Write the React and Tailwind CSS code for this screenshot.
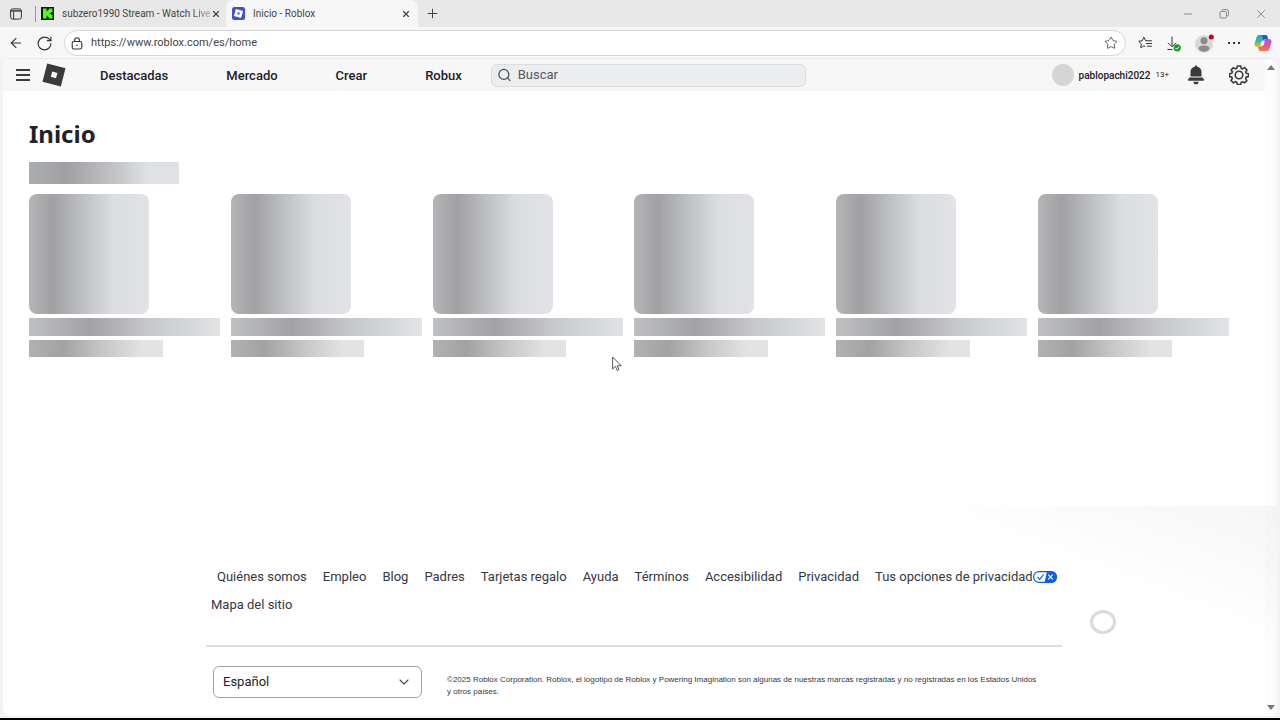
import { ArrowLeft, ChevronDown, Minus, Plus, RotateCw, Search, Star, X } from "lucide-react";

const navLinks = ["Destacadas", "Mercado", "Crear", "Robux"];

const footerLinks = [
  "Quiénes somos",
  "Empleo",
  "Blog",
  "Padres",
  "Tarjetas regalo",
  "Ayuda",
  "Términos",
  "Accesibilidad",
  "Privacidad",
];

function KickIcon() {
  return (
    <svg viewBox="0 0 13 13" className="size-[13px] shrink-0">
      <rect width="13" height="13" fill="#0b1a08" />
      <path d="M2 1.500h3.600v2.700h1V3.100h1.300V1.500H11.500v3.500H10v1H8.800v1H10v1h1.500v3.500H7.900V9.900H6.600V8.800h-1v2.700H2z" fill="#53fc18" />
    </svg>
  );
}

function RobloxFavicon() {
  return (
    <svg viewBox="0 0 13 13" className="size-[13px] shrink-0">
      <rect width="13" height="13" rx="2.5" fill="#3d50d8" />
      <path d="M3.900 1.900l7.200 2-2 7.200-7.200-2zM5.700 5.200l-.5 2.100 2.100.5.5-2.100z" fill="#fff" fillRule="evenodd" />
    </svg>
  );
}

function RobloxLogo() {
  return (
    <svg viewBox="0 0 24 24" className="size-6">
      <path d="M5.200.5L23.500 5.200 18.800 23.500.5 18.800zM10.200 8.600l-1.400 5.200 5.200 1.400 1.400-5.200z" fill="#393b3d" fillRule="evenodd" />
    </svg>
  );
}

function LockIcon() {
  return (
    <svg viewBox="0 0 12 13" className="h-[13px] w-3 shrink-0" fill="none" stroke="#333" strokeWidth="1.100">
      <rect x="1.200" y="4.500" width="9.600" height="7.500" rx="1.800" />
      <path d="M3.600 4.300V3.200a2.400 2.400 0 014.800 0v1.100" />
      <circle cx="6" cy="8.200" r=".8" fill="#333" stroke="none" />
    </svg>
  );
}

function TabBar() {
  return (
    <div className="flex h-[27px] items-stretch bg-[#e8e8e8] font-[Roboto,sans-serif] text-[10px] text-[#444]">
      <button aria-label="Pestañas" className="flex w-8 items-center justify-center">
        <svg viewBox="0 0 12 12" className="size-3" fill="none" stroke="#333">
          <rect x=".6" y=".9" width="10.800" height="10.200" rx="2" />
          <path d="M.6 2.900h10.800" strokeWidth="1.400" />
          <path d="M3.600 3.500v7.500" />
        </svg>
      </button>
      <div className="flex w-[194px] items-center gap-2 pl-[3px] pr-[6px]">
        <span className="-mr-[3px] h-4 w-px shrink-0 bg-[#999]" />
        <KickIcon />
        <span className="-mr-2 flex-1 whitespace-nowrap">
          subzero1990 Stream - Watch <span className="bg-linear-to-r from-[#444] to-[#bbb] bg-clip-text text-transparent">Live</span>
        </span>
        <button aria-label="Cerrar pestaña" className="shrink-0">
          <X className="size-[10px]" strokeWidth={2.800} />
        </button>
      </div>
      <div className="flex w-[192px] items-center gap-2 rounded-t-lg bg-[#f7f7f7] pl-[6px] pr-[7px]">
        <RobloxFavicon />
        <span className="flex-1">Inicio - Roblox</span>
        <button aria-label="Cerrar pestaña">
          <X className="size-[10px]" strokeWidth={2.800} />
        </button>
      </div>
      <button aria-label="Nueva pestaña" className="flex w-7 items-center justify-center">
        <Plus className="size-[15px]" strokeWidth={1.600} />
      </button>
      <div className="ml-auto flex items-center gap-6 pr-3 text-[#888]">
        <button aria-label="Minimizar">
          <Minus className="size-3" strokeWidth={2} />
        </button>
        <button aria-label="Restaurar">
          <svg viewBox="0 0 12 12" className="size-3" fill="none" stroke="currentColor">
            <rect x="2" y="3.500" width="6.500" height="6.500" rx="1.200" />
            <path d="M4 3.200V2.800A1.300 1.300 0 015.300 1.500h3.200a2 2 0 012 2v3A1.300 1.300 0 019.200 7.900h-.5" />
          </svg>
        </button>
        <button aria-label="Cerrar">
          <X className="size-[14px]" strokeWidth={1.600} />
        </button>
      </div>
    </div>
  );
}

function CopilotIcon() {
  return (
    <svg viewBox="0 0 18 18" className="size-[18px]">
      <defs>
        <linearGradient id="cpA" x1="0" y1="0" x2="0" y2="1">
          <stop offset="0" stopColor="#1ba8e8" />
          <stop offset=".55" stopColor="#4bb88a" />
          <stop offset="1" stopColor="#f3c21c" />
        </linearGradient>
        <linearGradient id="cpB" x1="0" y1="0" x2="0" y2="1">
          <stop offset="0" stopColor="#a95be8" />
          <stop offset=".5" stopColor="#e7509a" />
          <stop offset="1" stopColor="#f5784a" />
        </linearGradient>
      </defs>
      <path d="M5 1h6.500c1 0 1.500.6 1.800 1.500L14 5h-2.500c-1.200 0-1.800.6-2.200 1.800L7.500 13H3.500C1 13 0 11.500.7 9.200L2.600 3C3 1.700 3.800 1 5 1z" fill="url(#cpA)" />
      <path d="M13 17H6.500c-1 0-1.500-.6-1.800-1.500L4 13h2.500c1.200 0 1.800-.6 2.200-1.800L10.500 5h4c2.500 0 3.500 1.500 2.800 3.800L15.400 15c-.4 1.300-1.200 2-2.400 2z" fill="url(#cpB)" />
      <path d="M8 1h3.500c1 0 1.500.6 1.800 1.500L14 5h-2.500c-1 0-1.700.4-2.100 1.400z" fill="#2456cf" />
      <path d="M7.600 7h3.200l-1.300 4.500H6.300z" fill="#fff" />
    </svg>
  );
}

function AddressBar() {
  return (
    <div className="flex h-[31px] items-center bg-[#f7f7f7] pl-2 pr-2 pt-px text-[#333]">
      <button aria-label="Atrás">
        <ArrowLeft className="size-4" strokeWidth={1.600} />
      </button>
      <button aria-label="Actualizar" className="ml-3">
        <RotateCw className="size-[17px]" strokeWidth={1.600} />
      </button>
      <div className="ml-[11px] flex h-[26px] flex-1 items-center rounded-full border border-[#d6d6d6] bg-white pl-[6px] pr-[7px]">
        <LockIcon />
        <input
          aria-label="Dirección"
          defaultValue="https://www.roblox.com/es/home"
          className="ml-2 flex-1 bg-transparent pt-px font-[Roboto,sans-serif] text-[11px] text-[#444] outline-none"
        />
        <button aria-label="Favorito">
          <Star className="size-[14px] text-[#555]" strokeWidth={1.600} />
        </button>
      </div>
      <div className="flex items-center gap-[14px] pl-3">
        <button aria-label="Favoritos">
          <svg viewBox="0 0 14 14" className="size-[14px]" fill="none" stroke="currentColor" strokeLinejoin="round" strokeLinecap="round">
            <path d="M8.800 4.800H7.700L5.800 1.200 4.200 4.800.7 5.300l2.600 2.600-.6 3.800L5.800 10l1 .5M9.500 4.800h4M8.500 7.500h5M9.500 10.200h4" />
          </svg>
        </button>
        <button aria-label="Descargas">
          <svg viewBox="0 0 15 17" className="h-[17px] w-[15px]">
            <path d="M6 1.500v10M2 7.800l4 4 4-4M1.500 14.500h5" fill="none" stroke="#333" />
            <circle cx="11.200" cy="12.800" r="3.600" fill="#169c1e" />
            <path d="M9.400 12.900l1.300 1.300 2.300-2.500" fill="none" stroke="#fff" />
          </svg>
        </button>
        <button aria-label="Perfil">
          <svg viewBox="0 0 19 19" className="size-[19px]">
            <circle cx="9" cy="10" r="9" fill="#d9d9d9" />
            <circle cx="9" cy="6.800" r="3.500" fill="#8b8b8b" />
            <path d="M3.500 14.500c0-2 1.800-3 5.500-3s5.500 1 5.500 3c-1.200 2.200-3 3.300-5.500 3.300s-4.300-1.100-5.500-3.300z" fill="#8b8b8b" />
            <circle cx="16.300" cy="3" r="2.500" fill="#c5001f" />
          </svg>
        </button>
        <button aria-label="Más" className="flex gap-[3px]">
          <span className="size-[2px] bg-[#333]" />
          <span className="size-[2px] bg-[#333]" />
          <span className="size-[2px] bg-[#333]" />
        </button>
        <button aria-label="Copilot">
          <CopilotIcon />
        </button>
      </div>
    </div>
  );
}

function NavBar() {
  return (
    <header className="flex h-8 items-center bg-[#f7f7f8] pl-[13px] pr-4 text-[#202227]">
      <button aria-label="Menú" className="flex w-[14px] flex-col gap-[3px]">
        <span className="h-[2px] bg-[#393b3d]" />
        <span className="h-[2px] bg-[#393b3d]" />
        <span className="h-[2px] bg-[#393b3d]" />
      </button>
      <a href="#" aria-label="Roblox" className="ml-3">
        <RobloxLogo />
      </a>
      <nav className="ml-[5px] flex pt-[2px] text-[13px] font-medium">
        {navLinks.map((label) => (
          <a key={label} href="#" className="px-[29px]">
            {label}
          </a>
        ))}
      </nav>
      <label className="flex h-[23px] w-[315px] items-center gap-[6px] rounded-md border border-[#dcdde0] bg-[#ecedef] px-[5px]">
        <Search className="size-4 text-[#494d5a]" strokeWidth={2} />
        <input
          aria-label="Buscar"
          placeholder="Buscar"
          className="w-full bg-transparent text-[13px] outline-none placeholder:text-[#55585f]"
        />
      </label>
      <div className="ml-auto flex items-center">
        <span className="size-[22px] rounded-full bg-[#d5d5d6]" />
        <a href="#" className="ml-[5px] text-[10px] font-medium">
          pablopachi2022
        </a>
        <span className="ml-[5px] text-[8px]">13+</span>
        <button aria-label="Notificaciones" className="ml-[18px]">
          <svg viewBox="0 0 18 20" className="h-5 w-[18px]" fill="#393b3d">
            <path d="M9 .5c.9 0 1.300.5 1.300 1.300 2.700.6 4.200 2.600 4.200 5.200v4.500h-11V7c0-2.600 1.500-4.600 4.200-5.200C7.700 1 8.100.5 9 .5zM2.500 12.500h13l1.300 1.700c.5.700.2 1.600-.8 1.600H2c-1 0-1.300-.9-.8-1.600zM6.200 16.700h5.600c-.3 1.600-1.300 2.600-2.800 2.600s-2.500-1-2.800-2.600z" />
          </svg>
        </button>
        <button aria-label="Configuración" className="ml-6">
          <svg viewBox="0 0 20 20" className="size-5" fill="none" stroke="#393b3d" strokeWidth="1.600" strokeLinejoin="round">
            <path d="M8.300 1h3.400l.5 2.300 1.400.6 2-1.300L18 5l-1.300 2 .5 1.300 2.300.4v2.900l-2.300.5-.6 1.500 1.300 2-2.400 2.300-2-1.200-1.300.5-.5 2.300H8.300l-.5-2.300-1.400-.6-2 1.300L2 15.500l1.300-2-.5-1.400-2.300-.5V8.700l2.300-.5.600-1.400L2.100 5l2.300-2.400 2 1.300 1.400-.6z" />
            <circle cx="10" cy="10" r="3.800" />
          </svg>
        </button>
      </div>
    </header>
  );
}

function SkeletonCard() {
  return (
    <div className="flex flex-col gap-1">
      <div className="size-[120px] rounded-lg bg-[linear-gradient(to_right,#b4b5b7_0%,#a1a1a3_20%,#bfc0c3_45%,#dcdde0_70%,#e2e3e6_100%)]" />
      <div className="h-[18px] bg-[linear-gradient(to_right,#bfc0c2_0%,#a2a2a4_32%,#c6c7ca_62%,#e2e3e5_100%)]" />
      <div className="h-[17px] w-[70%] bg-[linear-gradient(to_right,#b0b2b3_0%,#a0a2a3_25%,#c6c7c9_55%,#e2e3e5_85%)]" />
    </div>
  );
}

function PrivacyBadge() {
  return (
    <svg viewBox="0 0 24 12" className="h-3 w-6">
      <rect x=".6" y=".6" width="22.800" height="10.800" rx="5.400" fill="#fff" stroke="#0b5fe8" strokeWidth="1.200" />
      <path d="M14 0h4a6 6 0 010 12h-6.500z" fill="#0b5fe8" />
      <path d="M4.500 6.200l2.200 2.200L10.600 3.500" fill="none" stroke="#0b5fe8" strokeWidth="1.200" />
      <path d="M15.300 3.700l4.400 4.600M19.700 3.700l-4.400 4.600" stroke="#fff" strokeWidth="1.200" />
    </svg>
  );
}

function Footer() {
  return (
    <footer className="mx-auto mt-auto w-full max-w-[856px] pb-[18px] text-[#35383f]">
      <ul className="flex flex-wrap gap-x-4 pl-[11px] text-[13px] leading-7">
        {footerLinks.map((label) => (
          <li key={label}>
            <a href="#">{label}</a>
          </li>
        ))}
        <li>
          <a href="#" className="flex items-center">
            Tus opciones de privacidad
            <PrivacyBadge />
          </a>
        </li>
      </ul>
      <a href="#" className="ml-[5px] text-[13px] leading-7">
        Mapa del sitio
      </a>
      <div className="mt-[26px] flex items-center border-t-2 border-[#dcdddf] pl-[7px] pt-[19px]">
        <div className="relative w-[209px] shrink-0">
          <select
            aria-label="Idioma"
            className="h-8 w-full appearance-none rounded-md border border-[#a2a3a6] bg-white px-[9px] text-[13px] text-[#202227]"
          >
            <option>Español</option>
          </select>
          <ChevronDown className="pointer-events-none absolute right-[10px] top-2 size-4 text-[#444]" strokeWidth={1.600} />
        </div>
        <p className="ml-[25px] pr-6 pt-2 font-['Liberation_Sans',sans-serif] text-[8px] leading-3">
          ©2025 Roblox Corporation. Roblox, el logotipo de Roblox y Powering Imagination son algunas de nuestras marcas
          registradas y no registradas en los Estados Unidos y otros países.
        </p>
      </div>
    </footer>
  );
}

export default function App() {
  return (
    <div className="relative flex min-h-screen flex-col overflow-hidden border-b-2 border-black bg-[#f3f3f3]">
      <TabBar />
      <AddressBar />
      <div className="mx-[3px] mb-[2px] flex flex-1 rounded-lg border-t border-[#e8e8e8] bg-white font-[Roboto,sans-serif]">
        <div className="flex min-w-0 flex-1 flex-col">
          <NavBar />
          <main className="pl-[26px] pr-9 pt-[27px]">
            <h1 className="font-['Noto_Sans',sans-serif] text-2xl font-bold leading-8 text-[#202227]">Inicio</h1>
            <div className="mt-3 h-[22px] w-[150px] bg-[linear-gradient(to_right,#abadae_0%,#a0a0a2_25%,#c6c7c9_60%,#e0e1e5_80%)]" />
            <div className="mt-[10px] grid grid-cols-6 gap-[11px]">
              {[1, 2, 3, 4, 5, 6].map((n) => (
                <SkeletonCard key={n} />
              ))}
            </div>
          </main>
          <Footer />
        </div>
        <div className="flex w-3 flex-col items-center justify-between rounded-r-lg bg-[#fcfcfc] py-[6px]">
          <svg viewBox="0 0 8 5" className="h-[5px] w-2" fill="#777">
            <path d="M4 0l4 5H0z" />
          </svg>
          <svg viewBox="0 0 8 5" className="h-[5px] w-2" fill="#777">
            <path d="M0 0h8L4 5z" />
          </svg>
        </div>
      </div>

      <div className="pointer-events-none absolute bottom-[80px] right-[3px] h-[132px] w-[348px] bg-[linear-gradient(to_bottom_left,rgba(0,0,0,0.035),transparent_55%)]" />
      <div className="absolute bottom-[84px] right-[164px] h-6 w-[26px] rounded-[50%] border-[3px] border-[#dadada]" />

      {/* mouse pointer */}
      <svg viewBox="0 0 10 16" className="pointer-events-none absolute left-[612px] top-[356px] h-4 w-[10px]" fill="#fff" stroke="#444" strokeWidth=".9">
        <path d="M.6 1v12l2.800-2.600 1.900 4 1.800-.8-1.900-3.900h4z" />
      </svg>
    </div>
  );
}
